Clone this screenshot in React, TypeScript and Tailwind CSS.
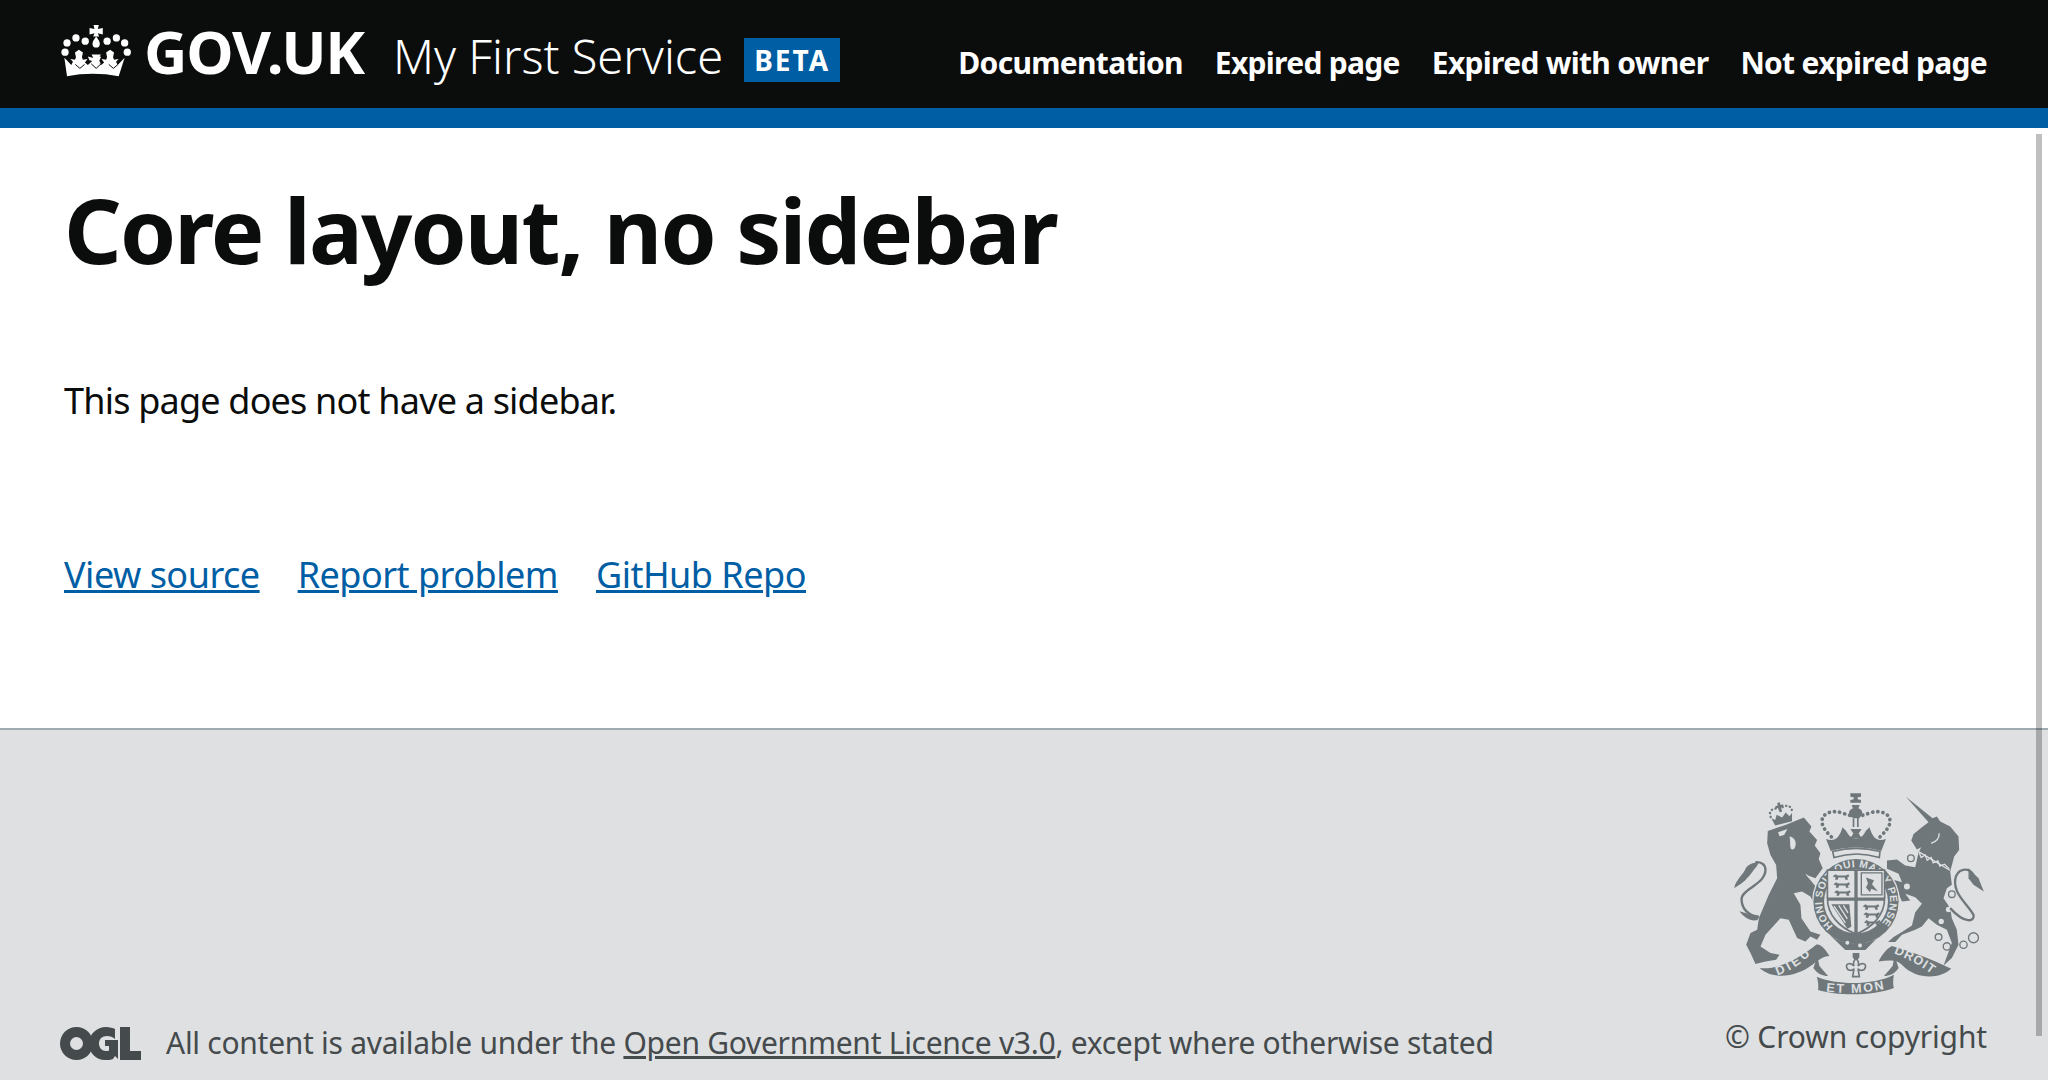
const NAV = ["Documentation", "Expired page", "Expired with owner", "Not expired page"];
const LINKS = ["View source", "Report problem", "GitHub Repo"];

function Crown() {
  return (
    <svg viewBox="60 40 215 160" className="w-[72px] h-[53px] shrink-0" fill="#fff">
      {[[80, 97], [107, 82], [135, 92], [201, 92], [229, 82], [254, 97], [74, 125], [262, 125]].map(([cx, cy]) => (
        <circle key={`${cx}-${cy}`} cx={cx} cy={cy} r="11" />
      ))}
      <path d="M160 43h16l-3 12 15-3v20l-15-4 4 10h-18l4-10-15 4V52l15 3z" />
      <path d="M168 78c7 10 11 15 11 22a11 11 0 0 1-22 0c0-7 4-12 11-22z" />
      <path d="M72 142l21 22 5-10-8-8 14 2 3-8-3-14 12-8 12 8-3 14 3 8 14-2-8 10 9 8 13-12-4-2h-4l-5-12 14 4h12l14-4-5 12h-4l-4 2 13 12 9-8-8-10 14 2 3-8-3-14 12-8 12 8-3 14 3 8 14-2-8 8 5 10 21-22-18 56c-50-10-106-10-156 0z" />
      <path d="M154 132h28l-7 14 7 14h-28l7-14z" />
      <path d="M105 162l14 12 14-12M206 162l14 12 14-12M153 160l15 14 15-14" stroke="#0b0c0c" strokeWidth="3" fill="none" />
    </svg>
  );
}

function OglLogo() {
  return (
    <svg viewBox="0 0 81 33" className="w-[81px] h-[33px] shrink-0" fill="#454a4c">
      <path fillRule="evenodd" d="M16.500 0a16.500 16.500 0 1 0 0 33 16.500 16.500 0 0 0 0-33zm0 10a6.500 6.500 0 1 1 0 13 6.500 6.500 0 0 1 0-13z" />
      <path d="M46 0c4 0 7 1 9 2v10c-2-2-5-3-8-3-5 0-8 3-8 7.500s3 7.500 7 7.500c1.500 0 2.500 0 3-.5V19h-4v-6h13v19l-3-3-2 3c-2 1-5 1-8 1-9 0-16-7-16-16.500S37 0 46 0z" />
      <path d="M60 0h10v24h11v9H60z" />
    </svg>
  );
}

const PASSANT = "M0 7L8 0l7 4h24l8-4 3 6-6 4 2 7h-8l-2-7H17l-2 7H7l2-7z";

function RoyalArms() {
  const ink = "#6f777b";
  const bg = "#dee0e2";
  return (
    <svg viewBox="90 55 765 625" className="w-[255px] h-[208px]" fill={ink}>
      <defs>
        <path id="garterRing" d="M393 464A102 102 0 1 1 531 464" />
        <path id="dieu" d="M226 612Q290 590 335 538" />
        <path id="etmon" d="M372 660Q462 672 552 652" />
        <path id="droit" d="M575 546Q640 570 695 612" />
      </defs>

      {/* lion crown */}
      <g transform="rotate(-14 237 125)">
        <path d="M204 128c-4-22 18-26 33-16 15-10 37-6 33 16" fill="none" stroke={ink} strokeWidth="7" strokeLinecap="round" strokeDasharray="0.5 11" />
        <path d="M233 92h8v8h8v7h-8v14h-8v-14h-8v-7h8z" />
        <path d="M205 132l10 8 8-14 14 12 14-12 8 14 10-8-6 24h-52z" />
      </g>

      {/* lion */}
      <path d="M197 178l53-18 55-22 23 27-6 15 23 25-7 17 17 23-5 17 12 28-22 30-28-10 33 40 20 45 5 20-25-5-20-35-25-15-25 5 20 35 3 40 27 40 30 10-10 15-20-10-15 15-25-10-25-55-25-5-45 50-15 35 30 20 27 5-10 15-32 5-30 8-15-33-13-25 13-35 20-10 5-35 30-70 25-50-3-40-17-30-10-35z" />
      <path d="M170 437c-32-6-50-25-52-52-2-32 72-46 72-90 0-18-14-24-30-23" fill="none" stroke={ink} strokeWidth="7" />
      <path d="M96 350c6-28 28-40 36-62 10-12 24-16 38-16l-6 12c-10 10-18 26-30 36-10 14-24 20-38 30z" />
      <path d="M112 420c18 2 34 14 58 12l-4 14c-22 4-38-6-54-26z" />
      <path d="M228 182l28-10-10 18-14 4zM262 195c12 2 22 12 18 28-2 10-10 14-14 8-4-10 0-22-4-36z" fill={bg} />
      <path d="M312 308l36 40" stroke={bg} strokeWidth="3" />

      {/* royal crown */}
      <path d="M445 65h32v10l-10 2v6l10 2v8h-32v-8l10-2v-6l-10-2z" />
      <ellipse cx="461" cy="124" rx="20" ry="16" />
      <path d="M449 100h24l-6 16h-12z" />
      <path d="M452 140h5v26h-5zM465 140h5v26h-5z" />
      <path d="M445 172h34l-9 14 9 14h-34l9-14z" />
      <path d="M388 196c-16-16-30-32-28-50 2-22 32-32 60-22 14 5 28 8 36 12M534 196c16-16 32-32 30-50-2-22-32-32-60-22-14 5-28 8-36 12" fill="none" stroke={ink} strokeWidth="11" strokeLinecap="round" strokeDasharray="0.5 15" />
      <path d="M372 202c30 10 40-6 50-36 4 8 10 8 14 18 12 22 40 22 52 0 4-10 10-10 14-18 10 30 20 46 50 36l-14 36c-48-14-104-14-152 0z" />
      <path d="M392 240c44-12 96-12 142 0l-2 18c-44-14-92-14-136 0z" fill="none" stroke={ink} strokeWidth="5" />

      {/* unicorn */}
      <path d="M612 75L692 140l13-5 10 15 30 15 25 30 2 40-15 20-12 45 5 40-15 10-10 30 20 30 5 30 15 35 5 45-20 40-25 22 10-27 15-40-15-40-30-15-25-20-20 25-20 10-40 15-20 22h-22l17-15 25-15 30-20 10-40 20-25-20-20-30-10 15 20-25 3-10-23-25-45 35 10-10-25-35-15v-25l30-3 25 18 30 5 10-45 8-15-13 7-17-27 7-20 25-20 20-15z" />
      <path d="M650 240l94 56" stroke={bg} strokeWidth="4" />
      <path d="M652 244l6 14 12-8 6 16 12-8 6 16 14-6 6 16 14-6 14 14" fill="none" stroke={bg} strokeWidth="4" />
      <path d="M712 185c0 16-10 26-24 30" fill="none" stroke={bg} strokeWidth="4" />
      <circle cx="627" cy="260" r="10" fill={bg} stroke={ink} strokeWidth="4" />
      <circle cx="615" cy="345" r="11" fill={bg} stroke={ink} strokeWidth="4" />
      <circle cx="750" cy="368" r="10" fill={bg} stroke={ink} strokeWidth="4" />
      <circle cx="740" cy="414" r="8" fill={bg} />
      <circle cx="718" cy="450" r="8" fill={bg} />
      <circle cx="710" cy="497" r="10" fill={bg} stroke={ink} strokeWidth="4" />
      <circle cx="735" cy="525" r="11" fill={bg} stroke={ink} strokeWidth="4" />
      <circle cx="785" cy="520" r="11" fill={bg} stroke={ink} strokeWidth="4" />
      <circle cx="815" cy="499" r="15" fill={bg} stroke={ink} strokeWidth="4" />
      <path d="M745 410c45 50 75 40 70 20-15-30-60-60-55-105 5-35 40-40 55-15" fill="none" stroke={ink} strokeWidth="7" />
      <path d="M800 290l30 30 16 40-31-20-15-20z" />

      {/* shield and garter */}
      <circle cx="462" cy="390" r="132" fill={bg} />
      <circle cx="462" cy="390" r="128" />
      <circle cx="462" cy="390" r="96" fill={bg} />
      <text fill={bg} fontFamily="'Liberation Sans', sans-serif" fontWeight="700" fontSize="31">
        <textPath href="#garterRing" textLength="476" lengthAdjust="spacing">HONI SOIT QUI MAL Y PENSE</textPath>
      </text>
      <path d="M376 296h172v84c0 50-36 88-86 108-50-20-86-58-86-108z" fill={bg} stroke={ink} strokeWidth="5" />
      <path d="M457 296h10v190h-10zM376 378h172v10H376z" />
      {[[392, 308], [394, 332], [396, 356], [482, 398], [484, 422], [486, 446]].map(([x, y]) => (
        <path key={`${x}-${y}`} d={PASSANT} transform={`translate(${x} ${y})`} />
      ))}
      <path d="M478 304h62v66h-62z" fill="none" stroke={ink} strokeWidth="4" />
      <path d="M492 318l24 8-6 12 18 22-20-8-4 10-12-14 6-12z" />
      <path d="M388 398h54l6 68-12 6z" />
      <path d="M396 404l34 50M410 402l26 40M424 402l14 22" stroke={bg} strokeWidth="4" />

      <path d="M385 492c40 30 110 34 155 0l-20 14-30 30h-60z" />
      <circle cx="436" cy="514" r="6" fill={bg} />
      <circle cx="474" cy="522" r="6" fill={bg} />

      {/* motto */}
      <path d="M172 590c60 6 120-30 170-70 14-4 30 16 40 34-14 0-32 10-48 24-48 38-120 50-162 12z" />
      <path d="M334 590c12 18 28 24 44 24l-26-30-6-30zM590 590c-12 18-28 24-44 24l26-30 6-30z" />
      <path d="M344 616c60 26 172 26 232-6-4 20-2 36 0 40-60 24-170 24-228 6 2-14 0-28-4-40z" />
      <path d="M530 570c10-20 24-38 40-46 50 14 120 40 178 68-40 36-110 28-146-10-20-20-44-14-72-12z" />
      <g fill={bg} fontFamily="'Liberation Sans', sans-serif" fontWeight="700" fontSize="38">
        <text><textPath href="#dieu" textLength="118">DIEU</textPath></text>
        <text><textPath href="#etmon" textLength="176">ET MON</textPath></text>
        <text><textPath href="#droit" textLength="130">DROIT</textPath></text>
      </g>
      <path d="M452 545h20v14l-10 8-10-8z" />
      <path d="M462 560c8 10 10 16 6 24 10-12 26-8 22 4-2 10-16 12-22 4l4 24h-20l4-24c-6 8-20 6-22-4-4-12 12-16 22-4-4-8-2-14 6-24z" fill="none" stroke={ink} strokeWidth="5" />
    </svg>
  );
}

export default function App() {
  return (
    <div className="relative h-screen overflow-hidden flex flex-col bg-white font-['Noto_Sans',sans-serif] text-[#0b0c0c]">
      {/* Header */}
      <header className="h-[108px] shrink-0 bg-[#0b0c0c] text-white flex items-start justify-between pl-[60px] pr-[61px]">
        <div className="flex items-start">
          <div className="flex items-start mt-[24px]">
            <Crown />
            <span className="ml-[12px] text-[60px] leading-[54px] font-bold tracking-[-1.2px]">GOV.UK</span>
          </div>
          <span className="ml-[29px] mt-[28px] text-[47px] leading-[56px] font-light">My First Service</span>
          <span className="ml-[21px] mt-[38px] w-[96px] h-[44px] bg-[#005ea5] flex items-center justify-center text-[28px] font-bold tracking-[2px]">BETA</span>
        </div>
        <nav className="flex gap-8 pt-[43px]">
          {NAV.map((n) => (
            <a key={n} className="text-[30px] leading-[40px] font-bold tracking-[-0.7px]">{n}</a>
          ))}
        </nav>
      </header>
      <div className="h-5 shrink-0 bg-[#005ea5]" />

      {/* Main */}
      <main className="flex-1 px-16">
        <h1 className="pt-[41px] text-[90px] leading-[120px] font-bold tracking-[-1.9px]">Core layout, no sidebar</h1>
        <p className="mt-[87px] text-[36px] leading-[50px] tracking-[-0.8px]">This page does not have a sidebar.</p>
        <div className="mt-[124px] flex gap-[38px]">
          {LINKS.map((l) => (
            <a key={l} className="text-[36px] leading-[50px] text-[#005ea5] underline tracking-[-0.5px]">{l}</a>
          ))}
        </div>
      </main>

      {/* Footer */}
      <footer className="h-[352px] shrink-0 bg-[#dee0e2] border-t-2 border-[#a1acb2] text-[#454a4c] flex items-end justify-between pl-[60px] pr-[61px]">
        <div className="flex items-center gap-[25px] mb-[16px]">
          <OglLogo />
          <p className="text-[30px] leading-[42px] tracking-[-0.28px]">
            All content is available under the <a className="underline">Open Government Licence v3.0</a>, except where otherwise stated
          </p>
        </div>
        <div className="flex flex-col items-end mb-[22px]">
          <RoyalArms />
          <p className="mt-[18px] text-[30px] leading-[42px] tracking-[-0.15px]">© Crown copyright</p>
        </div>
      </footer>

      {/* Overlay scrollbar */}
      <div className="absolute left-[2036px] top-[134px] w-[6px] h-[902px] bg-black/25" />
    </div>
  );
}
